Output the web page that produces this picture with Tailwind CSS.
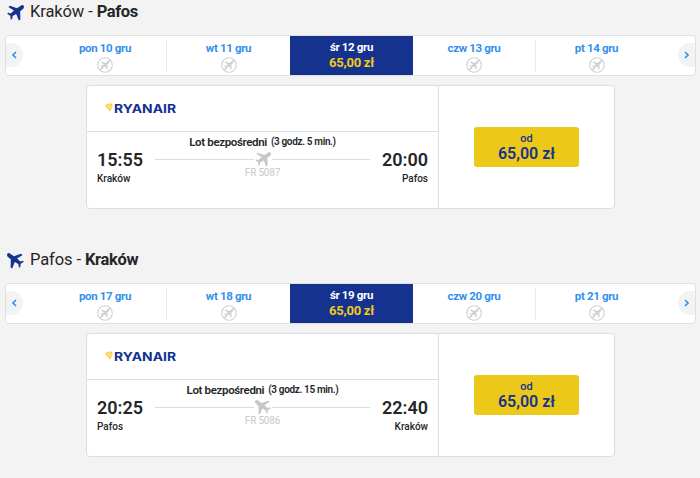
<!DOCTYPE html>
<html lang="pl">
<head>
    <meta charset="UTF-8">
    <meta name="viewport" content="width=device-width, initial-scale=1.0">
    <title>Wybierz lot</title>
    <script src="https://cdn.jsdelivr.net/npm/@tailwindcss/browser@4"></script>
</head>
<body class="bg-[#f3f3f3] font-[Roboto,sans-serif] text-[#262626] overflow-hidden">
    <!-- Shared icons -->
    <svg class="hidden">
        <symbol id="plane" viewBox="0 0 24 24">
            <path fill="currentColor" d="M23.500 2.400c-.9-1.300-2.700-1-4.100 0l-5.200 3.700L4.200 2.600 2 4.200l7.800 5-4.600 4.200-3.500-.9-1.500 1.200 4.400 2.800.9 5.700 1.800-1.100.7-4 5-3 3.700 9.300 2.200-1.500-.3-11.500 4-3.200C23.900 6.200 24.300 3.900 23.500 2.400z"/>
        </symbol>
        <symbol id="noflight" viewBox="0 0 16 16">
            <circle cx="8" cy="8" r="7.300" fill="none" stroke="currentColor" stroke-width="1.100"/>
            <path stroke="currentColor" stroke-width="1.200" d="M3 13 13 3"/>
            <use href="#plane" x="3" y="3.500" width="9.500" height="9.500"/>
        </symbol>
        <symbol id="logo" viewBox="0 0 72 12">
            <path fill="#f1d44b" d="M.3 3.600C1.200 1.800 4.500.9 7.300 2c.8 2.600-.6 5.700-2.900 7.800C4.200 8.300 3.700 7.400 2.200 6.400 1 5.500.4 4.600.3 3.600z"/>
            <path fill="none" stroke="#fff" stroke-width=".6" d="M2 4.400c1.300-1.300 3-1.300 3.700-.2.400 1-.4 1.900-1.200 2.800M3.200 5.300c.5-.4 1-.3 1.200.1"/>
            <text x="9" y="10.600" font-family="Inter" font-weight="700" font-size="11.300" textLength="62" lengthAdjust="spacingAndGlyphs" fill="#14328f">RYANAIR</text>
        </symbol>
    </svg>

    <main id="flights"></main>

    <script>
        const flights = [
            {
                from: 'Kraków', to: 'Pafos', number: 'FR 5087', flip: '',
                depart: '15:55', arrive: '20:00', duration: '3 godz. 5 min.',
                days: ['pon 10 gru', 'wt 11 gru', 'śr 12 gru', 'czw 13 gru', 'pt 14 gru'],
            },
            {
                from: 'Pafos', to: 'Kraków', number: 'FR 5086', flip: '-scale-x-100',
                depart: '20:25', arrive: '22:40', duration: '3 godz. 15 min.',
                days: ['pon 17 gru', 'wt 18 gru', 'śr 19 gru', 'czw 20 gru', 'pt 21 gru'],
            },
        ];

        function renderDay(day, i) {
            if (i === 2) {
                return `
                    <div class="w-[123px] h-[39px] bg-[#15328f] text-center font-bold pt-1">
                        <div class="text-[11.5px] leading-[15px] tracking-[-0.35px] text-white">${day}</div>
                        <div class="text-[13px] leading-[15px] tracking-[-0.25px] text-[#f1c91d]">65,00 zł</div>
                    </div>`;
            }
            const divider = i === 0 || i === 3 ? 'border-r border-[#e8eaec]' : '';
            const width = i === 4 ? 'w-[121px]' : 'w-[123px]';
            return `
                <div class="${width} h-[31px] mt-[5px] flex flex-col items-center ${divider}">
                    <div class="text-[11.5px] leading-[14px] tracking-[-0.35px] font-bold text-[#338fef]">${day}</div>
                    <svg class="size-4 mt-[2px] shrink-0 text-[#cdd1d3]"><use href="#noflight"/></svg>
                </div>`;
        }

        function renderFlight(f) {
            return `
            <section class="h-[248px] px-[5px]">
                <h2 class="flex items-center h-6 pl-[2px] text-[16.5px] tracking-[-0.1px]">
                    <svg class="size-[17px] mr-[6px] text-[#15328f] ${f.flip}"><use href="#plane"/></svg>
                    <span>${f.from} - <b class="font-bold tracking-[-0.35px]">${f.to}</b></span>
                </h2>

                <div class="relative mt-[11px] h-[41px] w-[691px] flex pl-[38px] bg-white border border-[#dde1e2] rounded-[4px]">
                    ${f.days.map(renderDay).join('')}
                    <button class="absolute left-0 top-[7px] w-[17px] h-6 rounded-r-full bg-[#f1f3f5] flex items-center justify-center">
                        <svg class="w-[5px] h-2" viewBox="0 0 5 8"><path d="M4 1 1 4l3 3" fill="none" stroke="#338fef" stroke-width="1.600"/></svg>
                    </button>
                    <button class="absolute right-0 top-[7px] w-[17px] h-6 rounded-l-full bg-[#f1f3f5] flex items-center justify-center">
                        <svg class="w-[5px] h-2" viewBox="0 0 5 8"><path d="M1 1l3 3-3 3" fill="none" stroke="#338fef" stroke-width="1.600"/></svg>
                    </button>
                </div>

                <div class="mt-[9px] ml-[81px] w-[529px] h-[124px] flex bg-white border border-[#dadfe2] rounded-[4px]">
                    <div class="w-[352px] border-r border-[#dadfe2]">
                        <div class="h-[46px] border-b border-[#dadfe2] pl-[18px] pt-4">
                            <svg class="w-[72px] h-3"><use href="#logo"/></svg>
                        </div>
                        <div class="flex justify-between pl-[10px] pr-[10px]">
                            <div class="w-[46px] pt-[17px]">
                                <div class="text-[18px] leading-[22px] font-semibold">${f.depart}</div>
                                <div class="text-[10px] leading-3 mt-[2px] font-medium">${f.from}</div>
                            </div>
                            <div class="w-[215px] flex flex-col items-center pt-[3px]">
                                <div class="flex gap-1 whitespace-nowrap font-semibold leading-[14px]">
                                    <span class="text-[11.5px] tracking-[-0.35px]">Lot bezpośredni</span>
                                    <span class="text-[10px] leading-[13px] tracking-[-0.35px]">(${f.duration})</span>
                                </div>
                                <div class="w-full flex items-center gap-px mt-[2px]">
                                    <div class="h-px w-[99px] mt-px bg-[#d8dde1]"></div>
                                    <svg class="size-4 text-[#c5c9cc] ${f.flip}"><use href="#plane"/></svg>
                                    <div class="h-px flex-1 mt-px bg-[#d8dde1]"></div>
                                </div>
                                <div class="text-[10px] leading-3 tracking-[-0.2px] text-[#c5c9cc]">${f.number}</div>
                            </div>
                            <div class="w-[46px] pt-[17px] flex flex-col items-end">
                                <div class="text-[18px] leading-[22px] font-semibold">${f.arrive}</div>
                                <div class="text-[10px] leading-3 mt-[2px] font-medium">${f.to}</div>
                            </div>
                        </div>
                    </div>
                    <div class="flex-1 flex justify-center items-center">
                        <button class="w-[105px] h-10 rounded-[3px] bg-[#ecc818] text-[#15328f] font-medium">
                            <div class="text-[11px] leading-[13px]">od</div>
                            <div class="text-[16px] leading-[18px] font-semibold">65,00 zł</div>
                        </button>
                    </div>
                </div>
            </section>`;
        }

        document.getElementById('flights').innerHTML = flights.map(renderFlight).join('');
    </script>
</body>
</html>
